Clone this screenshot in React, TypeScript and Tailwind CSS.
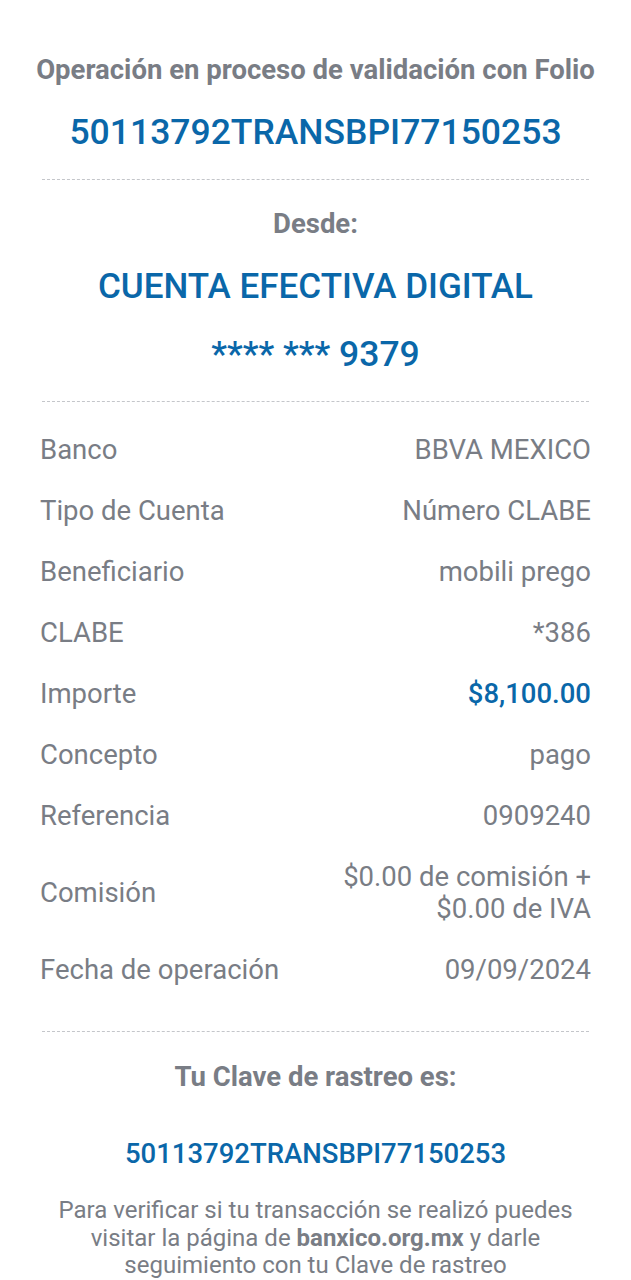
const rows: { label: string; value: React.ReactNode; blue?: boolean }[] = [
  { label: "Banco", value: "BBVA MEXICO" },
  { label: "Tipo de Cuenta", value: "Número CLABE" },
  { label: "Beneficiario", value: "mobili prego" },
  { label: "CLABE", value: "*386" },
  { label: "Importe", value: "$8,100.00", blue: true },
  { label: "Concepto", value: "pago" },
  { label: "Referencia", value: "0909240" },
  {
    label: "Comisión",
    value: (
      <>
        $0.00 de comisión +
        <br />
        $0.00 de IVA
      </>
    ),
  },
  { label: "Fecha de operación", value: "09/09/2024" },
];

function Divider() {
  return <div className="mx-[42px] border-t border-dashed border-[#c4c6ca]" />;
}

export default function App() {
  return (
    <div
      className="w-[631px] h-[1280px] bg-white text-[#797d85] overflow-hidden"
      style={{ fontFamily: "Roboto, 'Liberation Sans', sans-serif" }}
    >
      <div className="pt-[54px] text-center">
        <div className="text-[27.5px] leading-[32px] font-bold">
          Operación en proceso de validación con Folio
        </div>
        <div className="mt-[26px] text-[35.5px] leading-[40px] font-medium text-[#0a67a9]">
          50113792TRANSBPI77150253
        </div>
      </div>

      <div className="mt-[27px]">
        <Divider />
      </div>

      <div className="pt-[28px] text-center">
        <div className="text-[27.5px] leading-[32px] font-bold">Desde:</div>
        <div className="mt-[27px] text-[35px] leading-[40px] font-medium text-[#0a67a9]">
          CUENTA EFECTIVA DIGITAL
        </div>
        <div className="mt-[27px] text-[35.5px] leading-[40px] font-medium text-[#0a67a9]">
          **** *** 9379
        </div>
      </div>

      <div className="mt-[27px]">
        <Divider />
      </div>

      <div className="px-[40px] pt-[32px] flex flex-col gap-[29px]">
        {rows.map((r) => (
          <div
            key={r.label}
            className="flex items-center justify-between text-[27.5px] leading-[32px]"
          >
            <div>{r.label}</div>
            <div
              className={
                r.blue
                  ? "text-right font-medium text-[#0a67a9]"
                  : "text-right leading-[32px]"
              }
            >
              {r.value}
            </div>
          </div>
        ))}
      </div>

      <div className="mt-[45px]">
        <Divider />
      </div>

      <div className="pt-[29px] text-center">
        <div className="text-[27.5px] leading-[32px] font-bold">
          Tu Clave de rastreo es:
        </div>
        <div className="mt-[45px] text-[27.5px] leading-[32px] font-medium text-[#0a67a9]">
          50113792TRANSBPI77150253
        </div>
        <div className="mt-[27px] px-[50px] text-[24px] leading-[27.5px]">
          Para verificar si tu transacción se realizó puedes visitar la página de{" "}
          <span className="font-bold">banxico.org.mx</span> y darle seguimiento
          con tu Clave de rastreo
        </div>
      </div>
    </div>
  );
}
